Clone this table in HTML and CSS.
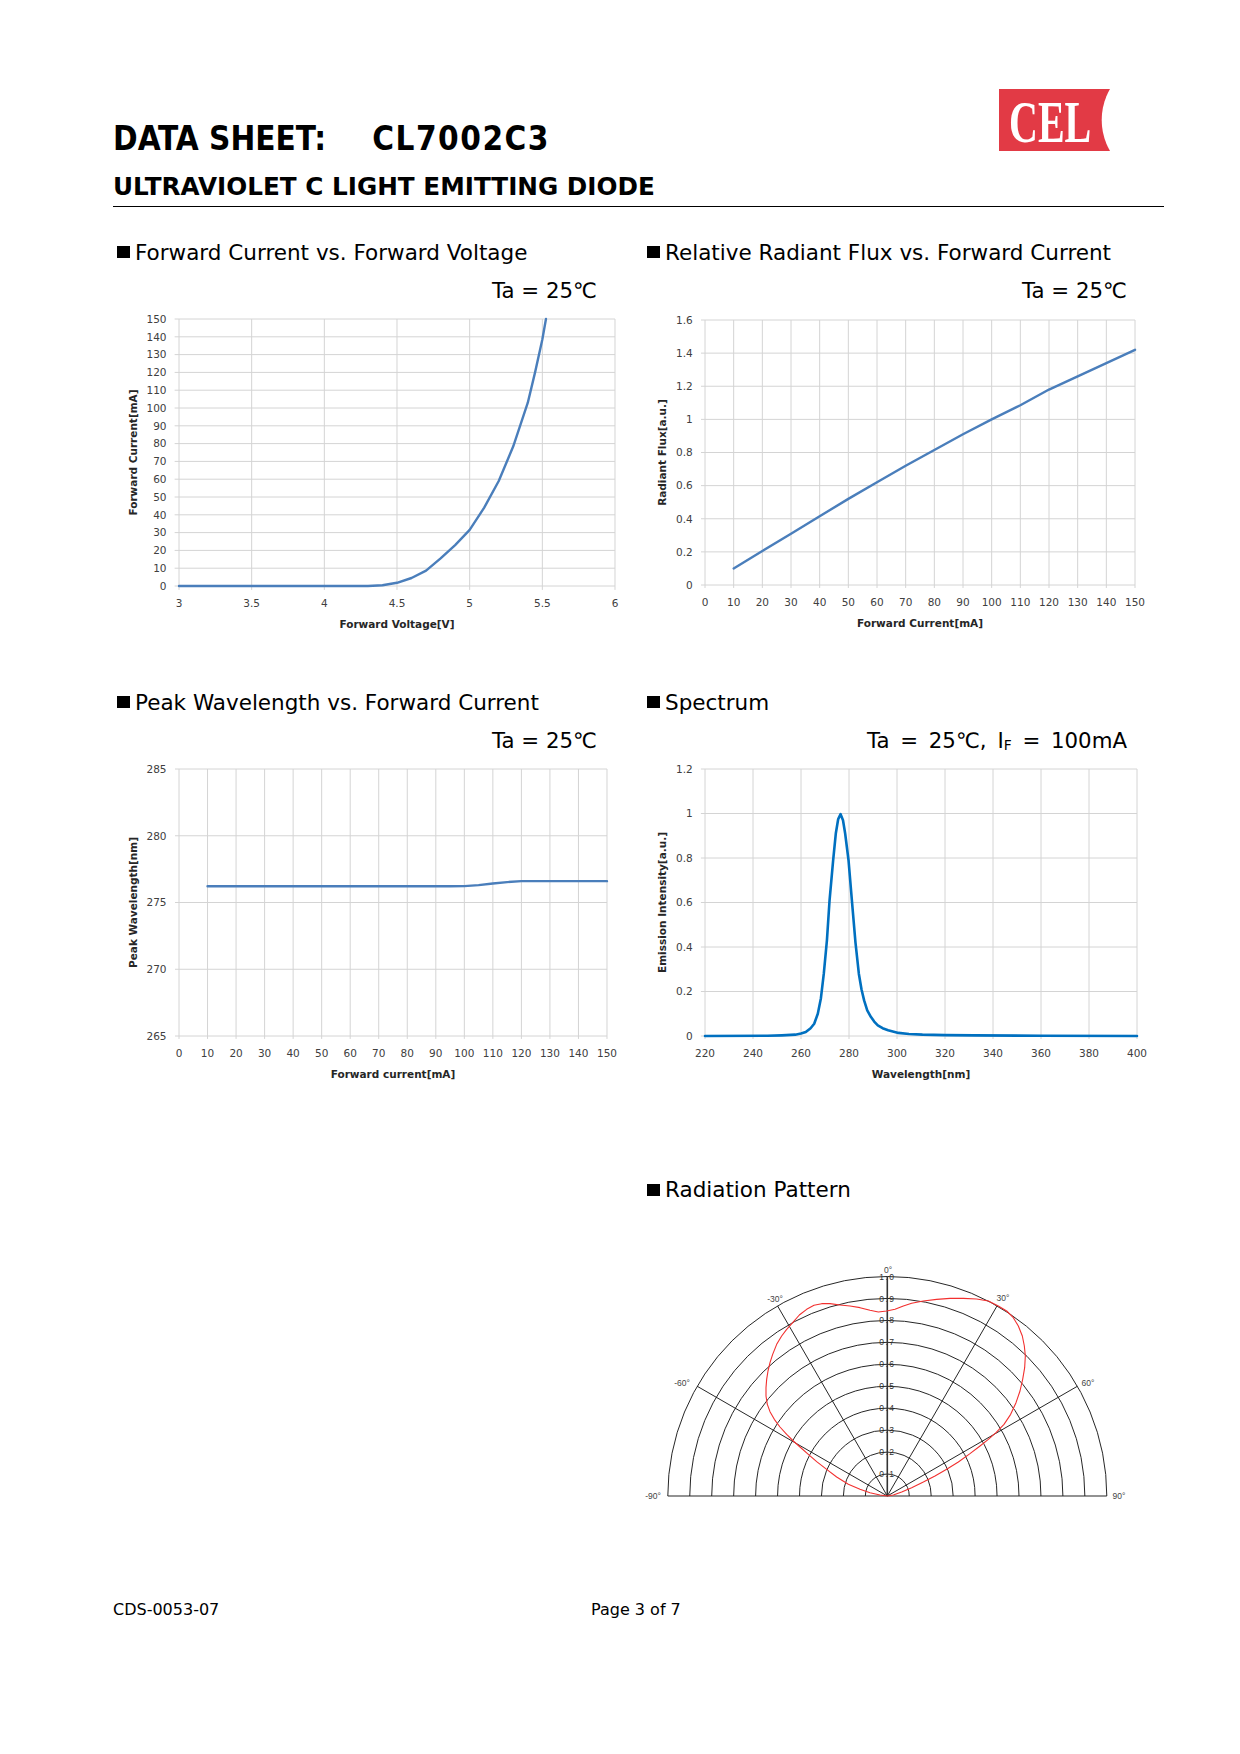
FILE: index.html
```html
<!DOCTYPE html>
<html lang="en">
<head>
<meta charset="utf-8">
<title>DATA SHEET: CL7002C3</title>
<link rel="stylesheet" href="styles.css">
</head>
<body>
<div class="page">
  <header class="head">
    <div class="head-text">
      <h1 class="title">DATA SHEET:<span class="model">CL7002C3</span></h1>
      <h2 class="subtitle">ULTRAVIOLET C LIGHT EMITTING DIODE</h2>
    </div>
    <svg class="logo" width="111" height="86" viewBox="0 -12 111 86">
      <rect width="111" height="62" fill="#e23a45"/>
      <circle cx="164.7" cy="31" r="62" fill="#fff"/>
      <text class="logo-text" transform="translate(10 52.7) scale(0.667 1)">CEL</text>
    </svg>
  </header>

  <main class="charts">
    <!-- Chart 1 -->
    <section class="chart">
      <h3 class="chart-title"><span class="bullet"></span>Forward Current vs. Forward Voltage</h3>
      <p class="cond">Ta = 25℃</p>
      <svg class="plot" width="530" height="336" viewBox="0 0 530 336">
        <g transform="translate(66 282) scale(145.333 -1.78) translate(-3 0)">
          <path class="grid" vector-effect="non-scaling-stroke" d="M3 -2.2V150M3.5 -2.2V150M4 -2.2V150M4.5 -2.2V150M5 -2.2V150M5.5 -2.2V150M6 -2.2V150M2.97 0H6M2.97 10H6M2.97 20H6M2.97 30H6M2.97 40H6M2.97 50H6M2.97 60H6M2.97 70H6M2.97 80H6M2.97 90H6M2.97 100H6M2.97 110H6M2.97 120H6M2.97 130H6M2.97 140H6M2.97 150H6"/>
          <polyline class="series" vector-effect="non-scaling-stroke" points="3,0 4.3,0 4.4,0.4 4.5,1.8 4.6,4.5 4.7,8.6 4.8,15.5 4.9,23 5.0,31.5 5.1,44 5.2,59 5.3,78.5 5.4,103 5.45,120 5.5,138.5 5.525,150"/>
        </g>
        <g class="ylab">
          <text x="53.5" y="285.8">0</text><text x="53.5" y="268">10</text><text x="53.5" y="250.2">20</text><text x="53.5" y="232.4">30</text><text x="53.5" y="214.6">40</text><text x="53.5" y="196.8">50</text><text x="53.5" y="179">60</text><text x="53.5" y="161.2">70</text><text x="53.5" y="143.4">80</text><text x="53.5" y="125.6">90</text><text x="53.5" y="107.8">100</text><text x="53.5" y="90">110</text><text x="53.5" y="72.2">120</text><text x="53.5" y="54.4">130</text><text x="53.5" y="36.6">140</text><text x="53.5" y="18.8">150</text>
        </g>
        <g class="xlab">
          <text x="66" y="302.5">3</text><text x="138.67" y="302.5">3.5</text><text x="211.33" y="302.5">4</text><text x="284" y="302.5">4.5</text><text x="356.67" y="302.5">5</text><text x="429.33" y="302.5">5.5</text><text x="502" y="302.5">6</text>
        </g>
        <text class="axt" x="284" y="323.8">Forward Voltage[V]</text>
        <text class="axt" transform="translate(23.5 148.5) rotate(-90)">Forward Current[mA]</text>
      </svg>
    </section>

    <!-- Chart 2 -->
    <section class="chart">
      <h3 class="chart-title"><span class="bullet"></span>Relative Radiant Flux vs. Forward Current</h3>
      <p class="cond">Ta = 25℃</p>
      <svg class="plot" width="521" height="336" viewBox="0 0 521 336">
        <g transform="translate(62 281) scale(2.86667 -165.625)">
          <path class="grid" vector-effect="non-scaling-stroke" d="M0 -0.018V1.6M10 -0.018V1.6M20 -0.018V1.6M30 -0.018V1.6M40 -0.018V1.6M50 -0.018V1.6M60 -0.018V1.6M70 -0.018V1.6M80 -0.018V1.6M90 -0.018V1.6M100 -0.018V1.6M110 -0.018V1.6M120 -0.018V1.6M130 -0.018V1.6M140 -0.018V1.6M150 -0.018V1.6M-1.4 0H150M-1.4 0.2H150M-1.4 0.4H150M-1.4 0.6H150M-1.4 0.8H150M-1.4 1H150M-1.4 1.2H150M-1.4 1.4H150M-1.4 1.6H150"/>
          <polyline class="series" vector-effect="non-scaling-stroke" points="10,0.1 20,0.205 30,0.31 40,0.415 50,0.52 60,0.62 70,0.72 80,0.815 90,0.91 100,1.0 110,1.085 120,1.18 130,1.26 140,1.34 150,1.42"/>
        </g>
        <g class="ylab">
          <text x="49.7" y="284.8">0</text><text x="49.7" y="251.7">0.2</text><text x="49.7" y="218.55">0.4</text><text x="49.7" y="185.4">0.6</text><text x="49.7" y="152.3">0.8</text><text x="49.7" y="119.2">1</text><text x="49.7" y="86.05">1.2</text><text x="49.7" y="52.9">1.4</text><text x="49.7" y="19.8">1.6</text>
        </g>
        <g class="xlab">
          <text x="62" y="301.5">0</text><text x="90.67" y="301.5">10</text><text x="119.33" y="301.5">20</text><text x="148" y="301.5">30</text><text x="176.67" y="301.5">40</text><text x="205.33" y="301.5">50</text><text x="234" y="301.5">60</text><text x="262.67" y="301.5">70</text><text x="291.33" y="301.5">80</text><text x="320" y="301.5">90</text><text x="348.67" y="301.5">100</text><text x="377.33" y="301.5">110</text><text x="406" y="301.5">120</text><text x="434.67" y="301.5">130</text><text x="463.33" y="301.5">140</text><text x="492" y="301.5">150</text>
        </g>
        <text class="axt" x="277" y="323.1">Forward Current[mA]</text>
        <text class="axt" transform="translate(22.5 148.5) rotate(-90)">Radiant Flux[a.u.]</text>
      </svg>
    </section>

    <!-- Chart 3 -->
    <section class="chart">
      <h3 class="chart-title"><span class="bullet"></span>Peak Wavelength vs. Forward Current</h3>
      <p class="cond">Ta = 25℃</p>
      <svg class="plot" width="530" height="336" viewBox="0 0 530 336">
        <g transform="translate(66 282) scale(2.85333 -13.35) translate(0 -265)">
          <path class="grid" vector-effect="non-scaling-stroke" d="M0 264.78V285M10 264.78V285M20 264.78V285M30 264.78V285M40 264.78V285M50 264.78V285M60 264.78V285M70 264.78V285M80 264.78V285M90 264.78V285M100 264.78V285M110 264.78V285M120 264.78V285M130 264.78V285M140 264.78V285M150 264.78V285M-1.4 265H150M-1.4 270H150M-1.4 275H150M-1.4 280H150M-1.4 285H150"/>
          <polyline class="series" vector-effect="non-scaling-stroke" points="10,276.22 95,276.22 100,276.23 105,276.3 110,276.42 115,276.53 120,276.6 150,276.6"/>
        </g>
        <g class="ylab">
          <text x="53.5" y="285.8">265</text><text x="53.5" y="219.05">270</text><text x="53.5" y="152.3">275</text><text x="53.5" y="85.55">280</text><text x="53.5" y="18.8">285</text>
        </g>
        <g class="xlab">
          <text x="66" y="302.5">0</text><text x="94.53" y="302.5">10</text><text x="123.07" y="302.5">20</text><text x="151.6" y="302.5">30</text><text x="180.13" y="302.5">40</text><text x="208.67" y="302.5">50</text><text x="237.2" y="302.5">60</text><text x="265.73" y="302.5">70</text><text x="294.27" y="302.5">80</text><text x="322.8" y="302.5">90</text><text x="351.33" y="302.5">100</text><text x="379.87" y="302.5">110</text><text x="408.4" y="302.5">120</text><text x="436.93" y="302.5">130</text><text x="465.47" y="302.5">140</text><text x="494" y="302.5">150</text>
        </g>
        <text class="axt" x="280" y="324.1">Forward current[mA]</text>
        <text class="axt" transform="translate(23.5 148.5) rotate(-90)">Peak Wavelength[nm]</text>
      </svg>
    </section>

    <!-- Chart 4 -->
    <section class="chart">
      <h3 class="chart-title"><span class="bullet"></span>Spectrum</h3>
      <p class="cond cond-wide">Ta = 25℃, I<span class="sub">F</span> = 100mA</p>
      <svg class="plot" width="521" height="336" viewBox="0 0 521 336">
        <g transform="translate(62 282) scale(2.4 -222.5) translate(-220 0)">
          <path class="grid" vector-effect="non-scaling-stroke" d="M220 -0.0135V1.2M240 -0.0135V1.2M260 -0.0135V1.2M280 -0.0135V1.2M300 -0.0135V1.2M320 -0.0135V1.2M340 -0.0135V1.2M360 -0.0135V1.2M380 -0.0135V1.2M400 -0.0135V1.2M218.3 0H400M218.3 0.2H400M218.3 0.4H400M218.3 0.6H400M218.3 0.8H400M218.3 1H400M218.3 1.2H400"/>
          <polyline class="series series-dark" vector-effect="non-scaling-stroke" points="220,0 246,0.001 252,0.003 257.6,0.006 260,0.011 262,0.018 264,0.035 265.5,0.055 267,0.1 268.3,0.17 269.5,0.28 270.8,0.43 271.9,0.61 273.4,0.79 274.5,0.91 275.5,0.975 276.5,0.997 277.5,0.97 278.4,0.91 279.8,0.79 281.2,0.61 282.7,0.42 284.1,0.28 285.2,0.21 286.3,0.16 287.6,0.115 289.1,0.086 290.5,0.065 292,0.048 294,0.035 296.3,0.026 300.6,0.014 305,0.009 310.6,0.006 320,0.004 332,0.003 360,0.001 400,0"/>
        </g>
        <g class="ylab">
          <text x="49.7" y="285.8">0</text><text x="49.7" y="241.3">0.2</text><text x="49.7" y="196.8">0.4</text><text x="49.7" y="152.3">0.6</text><text x="49.7" y="107.8">0.8</text><text x="49.7" y="63.3">1</text><text x="49.7" y="18.8">1.2</text>
        </g>
        <g class="xlab">
          <text x="62" y="302.5">220</text><text x="110" y="302.5">240</text><text x="158" y="302.5">260</text><text x="206" y="302.5">280</text><text x="254" y="302.5">300</text><text x="302" y="302.5">320</text><text x="350" y="302.5">340</text><text x="398" y="302.5">360</text><text x="446" y="302.5">380</text><text x="494" y="302.5">400</text>
        </g>
        <text class="axt" x="278" y="324.1">Wavelength[nm]</text>
        <text class="axt" transform="translate(22.5 148.5) rotate(-90)">Emission Intensity[a.u.]</text>
      </svg>
    </section>

    <!-- Radiation pattern -->
    <section class="chart chart-polar">
      <h3 class="chart-title"><span class="bullet"></span>Radiation Pattern</h3>
      <svg class="plot" width="521" height="320" viewBox="0 0 521 320">
        <g class="rings">
          <path d="M222.35 293A21.95 21.95 0 0 1 266.25 293M200.4 293A43.9 43.9 0 0 1 288.2 293M178.45 293A65.85 65.85 0 0 1 310.15 293M156.5 293A87.8 87.8 0 0 1 332.1 293M134.55 293A109.75 109.75 0 0 1 354.05 293M112.6 293A131.7 131.7 0 0 1 376 293M90.65 293A153.65 153.65 0 0 1 397.95 293M68.7 293A175.6 175.6 0 0 1 419.9 293M46.75 293A197.55 197.55 0 0 1 441.85 293M24.8 293A219.5 219.5 0 0 1 463.8 293M24.8 293H463.8M244.3 293L354.05 102.9M244.3 293L134.55 102.9M244.3 293L434.4 183.25M244.3 293L54.2 183.25"/>
        </g>
        <g class="rlab">
          <text x="244.3" y="274.1">0.1</text><text x="244.3" y="252.1">0.2</text><text x="244.3" y="230.2">0.3</text><text x="244.3" y="208.2">0.4</text><text x="244.3" y="186.3">0.5</text><text x="244.3" y="164.3">0.6</text><text x="244.3" y="142.4">0.7</text><text x="244.3" y="120.4">0.8</text><text x="244.3" y="98.5">0.9</text><text x="244.3" y="76.5">1.0</text>
        </g>
        <path class="axis0" d="M244.3 293V73.5"/>
        <g class="alab">
          <text x="245" y="70">0°</text><text x="132" y="99">-30°</text><text x="360" y="98">30°</text><text x="39" y="183">-60°</text><text x="445" y="183">60°</text><text x="10" y="296">-90°</text><text x="476" y="296">90°</text>
        </g>
        <g transform="translate(-3 -32) scale(0.333333)">
          <polyline class="pattern" vector-effect="non-scaling-stroke" points="742,975 720,972 690,965 660,955 625,940 590,918 560,895 530,872 505,850 480,828 460,810 440,790 420,768 403,745 390,722 382,700 378,675 378,650 380,625 384,600 390,575 398,550 410,520 425,495 440,475 458,455 478,432 500,415 522,403 545,398 570,398 600,402 630,405 660,410 690,418 715,423 740,420 765,415 790,405 815,397 850,390 890,385 930,382 970,382 1010,384 1045,390 1075,405 1100,420 1120,440 1135,465 1147,495 1153,525 1156,555 1154,590 1148,625 1140,660 1128,695 1112,730 1092,760 1068,785 1045,805 1020,825 990,848 955,873 920,895 885,915 850,933 815,950 785,963 760,972 742,975"/>
        </g>
      </svg>
    </section>
  </main>

  <footer class="foot">
    <span>CDS-0053-07</span>
    <span>Page 3 of 7</span>
  </footer>
</div>
</body>
</html>
```

FILE: styles.css
```css
html, body {
  margin: 0;
  padding: 0;
  background: #fff;
}

body {
  color: #000;
  font-family: "DejaVu Sans", Verdana, sans-serif;
}

.page {
  width: 1240px;
  height: 1754px;
  box-sizing: border-box;
  padding: 89px 76px 0 113px;
}

/* ---------- header ---------- */
.head {
  display: flex;
  justify-content: space-between;
  align-items: flex-start;
  border-bottom: 1.5px solid #000;
}

.head-text {
  padding-top: 30px;
  padding-bottom: 4px;
}

.title {
  margin: 0;
  font-family: "DejaVu Sans Condensed", "DejaVu Sans", sans-serif;
  font-stretch: condensed;
  font-weight: bold;
  font-size: 33px;
  line-height: 40px;
}

.model {
  margin-left: 46px;
  letter-spacing: 1.5px;
}

.subtitle {
  margin: 13px 0 0;
  font-size: 24.7px;
  line-height: 30px;
  font-weight: bold;
}

.logo {
  display: block;
  margin: -12px 54px -12px 0;
}

.logo-text {
  font-family: "Liberation Serif", "Times New Roman", serif;
  font-weight: bold;
  font-size: 60px;
  fill: #fff;
}

/* ---------- charts ---------- */
.charts {
  display: grid;
  grid-template-columns: 530px 521px;
  row-gap: 50px;
  margin-top: 32.5px;
}

.chart-title {
  margin: 0;
  padding-left: 4px;
  font-size: 21.5px;
  line-height: 26px;
  font-weight: normal;
}

.bullet {
  display: inline-block;
  width: 13px;
  height: 12px;
  background: #000;
  margin: 0 5px 1.5px 0;
}

.cond {
  margin: 12px 0 0;
  width: 484px;
  text-align: right;
  font-size: 21.3px;
  line-height: 26px;
}

.cond-wide {
  word-spacing: 4px;
}

.sub {
  font-size: 0.65em;
  line-height: 0;
  vertical-align: -2px;
  word-spacing: 0;
}

.plot {
  display: block;
  overflow: visible;
}

.plot text {
  font-family: "DejaVu Sans", Verdana, sans-serif;
  font-size: 10.5px;
  fill: #404040;
}

.plot .ylab text {
  text-anchor: end;
}

.plot .xlab text {
  text-anchor: middle;
}

.plot .axt {
  font-weight: bold;
  text-anchor: middle;
  fill: #262626;
}

.grid {
  fill: none;
  stroke: #d4d4d4;
  stroke-width: 1;
}

.series {
  fill: none;
  stroke: #4a7ebb;
  stroke-width: 2.4;
  stroke-linejoin: round;
  stroke-linecap: round;
}

.series-dark {
  stroke: #0070c0;
  stroke-width: 2.6;
}

/* ---------- polar ---------- */
.chart-polar {
  grid-column: 2;
  margin-top: 37.5px;
}

.rings path {
  fill: none;
  stroke: #1a1a1a;
  stroke-width: 0.95;
}

.axis0 {
  fill: none;
  stroke: #333;
  stroke-width: 1.6;
}

.plot .rlab text {
  font-family: "Liberation Sans", Arial, sans-serif;
  font-size: 8.5px;
  letter-spacing: 1.4px;
  text-anchor: middle;
  fill: #333;
}

.plot .alab text {
  font-family: "Liberation Sans", Arial, sans-serif;
  font-size: 8.5px;
  text-anchor: middle;
  fill: #444;
}

.pattern {
  fill: none;
  stroke: #f2302f;
  stroke-width: 1.1;
  stroke-linejoin: round;
}

/* ---------- footer ---------- */
.foot {
  display: grid;
  grid-template-columns: 478px auto;
  margin-top: 77px;
  font-size: 16px;
  line-height: 20px;
}
```
